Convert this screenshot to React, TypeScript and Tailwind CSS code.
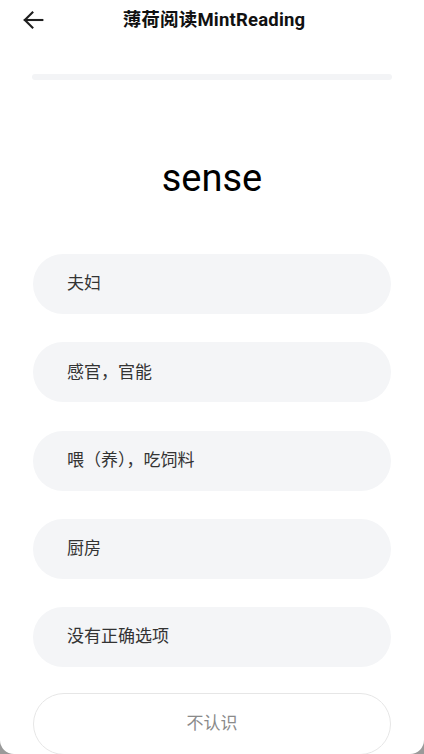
import React from "react";

const options = ["夫妇", "感官，官能", "喂（养），吃饲料", "厨房", "没有正确选项"];

const BackArrow = () => (
  <svg width="28" height="28" viewBox="0 0 24 24" fill="none" stroke="#1f1f1f" strokeWidth="1.8" strokeLinecap="square">
    <path d="M20 12H5" />
    <path d="M11.5 5.5 5 12l6.5 6.5" />
  </svg>
);

export default function App() {
  return (
    <div className="w-[424px] h-[754px] bg-[#9a9a9a] overflow-hidden" style={{ fontFamily: "Roboto, 'Noto Sans CJK SC', sans-serif" }}>
      <div className="h-full bg-white rounded-b-[14px] overflow-hidden">
        {/* header */}
        <div className="relative h-[42px] flex items-center justify-center">
          <button className="absolute left-[19px] top-[6px]" aria-label="back">
            <BackArrow />
          </button>
          <h1 className="text-[18.5px] font-bold text-[#111] pl-[4px] tracking-[0.2px]">薄荷阅读MintReading</h1>
        </div>

        {/* progress */}
        <div className="mx-[32px] mt-[32px] h-[6px] rounded-full bg-[#f3f4f6]" />

        {/* word */}
        <div className="h-[174px] pt-[24px] flex items-center justify-center">
          <span className="text-[38px] text-black leading-none pb-[2px]">sense</span>
        </div>

        {/* options */}
        <div className="px-[33px] flex flex-col gap-[28.25px]">
          {options.map((o) => (
            <div key={o} className="h-[60px] rounded-full bg-[#f4f5f7] flex items-center pl-[34px] text-[17px] text-[#333]">
              {o}
            </div>
          ))}
        </div>

        <div className="px-[33px] mt-[26px]">
          <div className="h-[62px] rounded-full border border-[#e6e6e6] flex items-center justify-center text-[17px] text-[#8a8a8a]">
            不认识
          </div>
        </div>
      </div>
    </div>
  );
}
